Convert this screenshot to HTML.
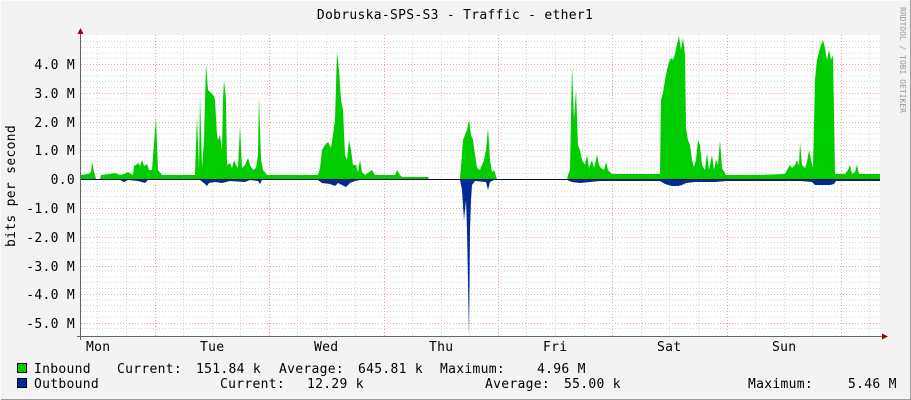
<!DOCTYPE html>
<html><head><meta charset="utf-8"><style>
html,body{margin:0;padding:0;background:#f3f3f3}
svg{display:block}
text{font-family:"DejaVu Sans Mono","Liberation Mono",monospace;font-size:13px;letter-spacing:0.3px;fill:#000}
</style></head><body>
<svg width="911" height="400" viewBox="0 0 911 400" xmlns="http://www.w3.org/2000/svg">
<rect x="0" y="0" width="911" height="400" fill="#f3f3f3"/>
<line x1="0" y1="0.5" x2="911" y2="0.5" stroke="#fcfcfc"/>
<line x1="910.5" y1="0" x2="910.5" y2="400" stroke="#9e9e9e"/>
<line x1="0" y1="399.5" x2="911" y2="399.5" stroke="#9e9e9e"/>
<line x1="0.5" y1="0" x2="0.5" y2="400" stroke="#fcfcfc"/>
<rect x="81" y="35" width="799" height="301" fill="#ffffff"/>
<g stroke="#d4d4d4" stroke-dasharray="1,2" stroke-width="1">
<path d="M81 41.5H880M81 47.5H880M81 53H880M81 58.5H880M81 70H880M81 76H880M81 81.5H880M81 87.5H880M81 99H880M81 104.5H880M81 110.5H880M81 116H880M81 127.5H880M81 133.5H880M81 139H880M81 145H880M81 156.5H880M81 162H880M81 168H880M81 173.5H880M81 185H880M81 191H880M81 196.5H880M81 202H880M81 213.5H880M81 219.5H880M81 225H880M81 231H880M81 242.5H880M81 248H880M81 254H880M81 259.5H880M81 271H880M81 277H880M81 282.5H880M81 288.5H880M81 300H880M81 305.5H880M81 311.5H880M81 317H880M81 328.5H880"/>
<path d="M97.5 35V336M126.5 35V336M183.5 35V336M212.5 35V336M240.5 35V336M297.5 35V336M326.5 35V336M355.5 35V336M412.5 35V336M441.5 35V336M469.5 35V336M526.5 35V336M555.5 35V336M584.5 35V336M641.5 35V336M669.5 35V336M698.5 35V336M755.5 35V336M784.5 35V336M812.5 35V336M869.5 35V336"/>
</g>
<g stroke="#f0a0a0" stroke-dasharray="1,2" stroke-width="1">
<path d="M81 64.5H880M81 93.5H880M81 122.5H880M81 150.5H880M81 208.5H880M81 237.5H880M81 266.5H880M81 294.5H880M81 323.5H880"/>
<path d="M155.5 35V336M269.5 35V336M384.5 35V336M498.5 35V336M612.5 35V336M727.5 35V336M841.5 35V336"/>
</g>
<path fill="#00cc00" d="M81 179 L81 175 L88 174 L91 172 L92 162 L94 172 L95 175 L96 179 L100 179 L101 175 L110 174 L115 173 L120 175 L124 174 L128 172 L133 175 L134 166 L136 165 L138 163 L140 166 L142 160 L144 166 L147 164 L149 170 L152 170 L156 118 L158 170 L162 175 L195 175 L197 117 L199 170 L200 95 L202 168 L204 140 L206 64 L208 90 L210 92 L212 94 L214 96 L215 100 L217 135 L218 140 L220 135 L222 150 L223 100 L224 80 L226 100 L227 165 L230 163 L232 168 L234 160 L236 165 L238 168 L240 127 L242 168 L245 165 L248 158 L250 165 L253 170 L256 168 L258 155 L259 98 L261 160 L263 170 L267 175 L318 175 L320 168 L322 150 L325 145 L328 142 L331 148 L333 135 L335 120 L337 52 L339 70 L341 100 L343 110 L345 155 L347 160 L349 140 L351 150 L353 165 L356 165 L358 172 L360 160 L362 172 L365 175 L372 170 L375 175 L395 175 L397 170 L400 175 L402 177 L428 177 L429 179 L460 179 L461 167 L463 140 L465 135 L467 130 L469 120 L471 135 L473 140 L475 155 L477 168 L480 170 L482 165 L484 160 L486 150 L488 128 L490 160 L492 172 L494 170 L497 179 L567 179 L568 175 L570 170 L572 66 L574 120 L576 90 L578 145 L580 150 L582 160 L585 165 L587 155 L589 168 L592 160 L594 168 L597 155 L599 165 L601 168 L604 170 L606 162 L608 170 L612 174 L655 174 L660 174 L661 100 L663 93 L665 80 L667 70 L669 62 L671 58 L673 60 L675 54 L677 44 L679 36 L681 50 L683 38 L685 55 L686 128 L688 140 L690 145 L692 160 L694 167 L696 160 L698 140 L700 145 L702 165 L705 170 L707 153 L709 170 L712 155 L714 170 L716 160 L718 165 L720 140 L722 168 L726 175 L760 175 L785 174 L787 170 L790 165 L792 168 L795 165 L797 160 L799 166 L800 142 L802 165 L805 168 L807 162 L809 150 L811 160 L813 168 L815 80 L817 60 L819 52 L821 45 L823 40 L825 48 L827 60 L829 50 L831 60 L833 55 L835 174 L845 174 L848 170 L850 165 L852 174 L855 172 L857 165 L859 174 L880 174 L880 179 Z"/>
<path fill="#002a97" d="M81 179 L81 180 L120 180 L124 182 L128 180 L138 181 L145 183 L148 180 L200 180 L205 184 L207 186 L209 183 L215 182 L222 183 L230 181 L245 182 L250 180 L258 181 L260 184 L262 180 L318 180 L322 183 L330 184 L335 186 L338 183 L342 185 L346 187 L350 183 L355 181 L360 180 L460 180 L462 190 L464 220 L466 200 L467 230 L469 336 L470 230 L471 200 L472 185 L475 181 L486 182 L488 190 L490 182 L494 180 L567 180 L572 182 L580 183 L590 182 L600 181 L612 181 L660 181 L665 184 L672 186 L678 186 L682 185 L686 183 L695 182 L705 182 L715 182 L727 181 L800 181 L812 182 L815 185 L820 185 L825 185 L830 185 L834 184 L836 181 L880 181 L880 179 Z"/>
<line x1="81" y1="179.5" x2="880" y2="179.5" stroke="#000" stroke-opacity="0.6"/>
<line x1="80.5" y1="32" x2="80.5" y2="340" stroke="#666"/>
<line x1="77" y1="336.5" x2="884" y2="336.5" stroke="#666"/>
<path d="M77.5 34 L80.5 28 L83.5 34 Z" fill="#a00000"/>
<path d="M882 333.5 L888 336.5 L882 339.5 Z" fill="#a00000"/>
<g text-anchor="end">
<text x="75" y="69">4.0 M</text>
<text x="75" y="98">3.0 M</text>
<text x="75" y="127">2.0 M</text>
<text x="75" y="155">1.0 M</text>
<text x="75" y="184">0.0</text>
<text x="75" y="213">-1.0 M</text>
<text x="75" y="242">-2.0 M</text>
<text x="75" y="271">-3.0 M</text>
<text x="75" y="299">-4.0 M</text>
<text x="75" y="328">-5.0 M</text>
</g>
<text transform="translate(15,186) rotate(-90)" text-anchor="middle">bits per second</text>
<text x="455" y="19" text-anchor="middle">Dobruska-SPS-S3 - Traffic - ether1</text>
<text transform="translate(900,7) rotate(90)" style="font-size:8px;letter-spacing:0;fill:#999">RRDTOOL / TOBI OETIKER</text>
<text x="86" y="351">Mon</text>
<text x="200" y="351">Tue</text>
<text x="314" y="351">Wed</text>
<text x="429" y="351">Thu</text>
<text x="543" y="351">Fri</text>
<text x="657" y="351">Sat</text>
<text x="772" y="351">Sun</text>
<rect x="17.5" y="363.5" width="9" height="9" fill="#00cc00" stroke="#000"/>
<rect x="17.5" y="378.5" width="9" height="9" fill="#002a97" stroke="#000"/>
<text x="34" y="373">Inbound</text>
<text x="117" y="373">Current:</text>
<text x="196" y="373">151.84 k</text>
<text x="279" y="373">Average:</text>
<text x="358" y="373">645.81 k</text>
<text x="440" y="373">Maximum:</text>
<text x="537" y="373">4.96 M</text>
<text x="34" y="388">Outbound</text>
<text x="220" y="388">Current:</text>
<text x="307" y="388">12.29 k</text>
<text x="485" y="388">Average:</text>
<text x="564" y="388">55.00 k</text>
<text x="748" y="388">Maximum:</text>
<text x="848" y="388">5.46 M</text>
</svg>
</body></html>
